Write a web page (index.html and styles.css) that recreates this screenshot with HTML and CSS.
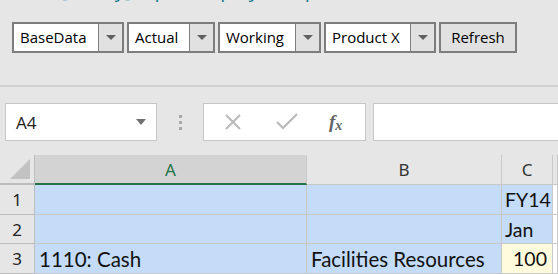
FILE: index.html
```html
<!DOCTYPE html>
<html>
<head>
<meta charset="utf-8">
<link rel="stylesheet" href="styles.css">
</head>
<body>
<div class="ribbon">
  <div class="title">Load [Query] Input Display Template</div>
  <div class="toolbar">
    <div class="combo"><span class="combo-text w84">BaseData</span><span class="combo-btn"><span class="tri"></span></span></div>
    <div class="combo"><span class="combo-text w60">Actual</span><span class="combo-btn"><span class="tri"></span></span></div>
    <div class="combo"><span class="combo-text w75">Working</span><span class="combo-btn"><span class="tri"></span></span></div>
    <div class="combo"><span class="combo-text w84">Product X</span><span class="combo-btn"><span class="tri"></span></span></div>
    <div class="button">Refresh</div>
  </div>
</div>
<div class="divider"></div>
<div class="fbar">
  <div class="namebox"><span>A4</span><span class="tri small"></span></div>
  <div class="dots"><i></i><i></i><i></i></div>
  <div class="fbtns">
    <svg class="ic-x" width="18" height="18" viewBox="0 0 18 18"><path d="M2 2 L16 16 M16 2 L2 16" stroke="#b9b9b9" stroke-width="2" fill="none"/></svg>
    <svg class="ic-ok" width="22" height="18" viewBox="0 0 22 18"><path d="M1 9 L7 15 L21 1" stroke="#b9b9b9" stroke-width="2.2" fill="none"/></svg>
    <span class="fx">f<sub>x</sub></span>
  </div>
  <div class="finput"></div>
</div>
<div class="sheet">
  <div class="row hdr">
    <div class="rh corner"><span class="corner-tri"></span></div>
    <div class="c a ch sel">A</div>
    <div class="c b ch">B</div>
    <div class="c cc ch">C</div>
    <div class="c d ch"></div>
  </div>
  <div class="row">
    <div class="rh">1</div>
    <div class="c a blue"></div>
    <div class="c b blue"></div>
    <div class="c cc blue">FY14</div>
    <div class="c d"></div>
  </div>
  <div class="row r2">
    <div class="rh">2</div>
    <div class="c a blue"></div>
    <div class="c b blue"></div>
    <div class="c cc blue">Jan</div>
    <div class="c d"></div>
  </div>
  <div class="row">
    <div class="rh">3</div>
    <div class="c a blue">1110: Cash</div>
    <div class="c b blue">Facilities Resources</div>
    <div class="c cc yellow num">100</div>
    <div class="c d"></div>
  </div>
</div>
</body>
</html>
```
FILE: styles.css
```css
html, body {
  margin: 0;
  padding: 0;
}
body {
  width: 558px;
  height: 274px;
  overflow: hidden;
  background: #e6e6e6;
  font-family: "Open Sans", "Noto Sans", sans-serif;
}
.ribbon {
  height: 85px;
  background: #e6e6e6;
  overflow: hidden;
}
.title {
  margin-top: -21px;
  margin-left: 10px;
  height: 25px;
  font-size: 20px;
  line-height: 22px;
  color: #1b7a93;
  white-space: nowrap;
}
.toolbar {
  display: flex;
  gap: 3px;
  padding-left: 12px;
  margin-top: 18px;
}
.combo {
  display: flex;
  height: 27px;
  border: 2px solid #7d7d7d;
  background: #e1e1e1;
}
.combo-text {
  background: #fff;
  font-size: 15px;
  line-height: 27px;
  color: #000;
  padding-left: 6px;
  box-sizing: border-box;
  white-space: nowrap;
}
.w84 { width: 84px; }
.w60 { width: 60px; }
.w75 { width: 75px; }
.combo-btn {
  width: 24px;
  box-sizing: border-box;
  border-left: 1px solid #7d7d7d;
  display: flex;
  align-items: center;
  justify-content: center;
  background: #e1e1e1;
}
.tri {
  width: 0;
  height: 0;
  border-left: 5px solid transparent;
  border-right: 5px solid transparent;
  border-top: 5px solid #606060;
}
.button {
  height: 27px;
  width: 74px;
  border: 2px solid #7d7d7d;
  background: #e1e1e1;
  font-size: 15px;
  line-height: 27px;
  text-align: center;
  color: #000;
}
.divider {
  height: 2px;
  background: #d2d2d2;
}
.fbar {
  height: 68px;
  box-sizing: border-box;
  padding-top: 16px;
  display: flex;
  align-items: flex-start;
}
.namebox {
  margin-left: 5px;
  width: 152px;
  height: 38px;
  box-sizing: border-box;
  border: 1px solid #c6c6c6;
  background: #fff;
  display: flex;
  align-items: center;
  justify-content: space-between;
  padding: 0 10px 0 10px;
  font-size: 17px;
  color: #222;
}
.tri.small {
  border-left-width: 5px;
  border-right-width: 5px;
  border-top: 6px solid #707070;
}
.dots {
  width: 46px;
  height: 38px;
  display: flex;
  flex-direction: column;
  align-items: center;
  justify-content: center;
  gap: 3px;
}
.dots i {
  width: 3px;
  height: 3px;
  background: #a8a8a8;
  display: block;
}
.fbtns {
  width: 163px;
  height: 38px;
  box-sizing: border-box;
  border: 1px solid #c6c6c6;
  background: #fff;
  display: flex;
  align-items: center;
  padding-left: 20px;
}
.ic-x { margin-right: 34px; }
.ic-ok { margin-right: 31px; }
.fx {
  font-family: "Liberation Serif", serif;
  font-style: italic;
  font-weight: bold;
  font-size: 19px;
  color: #666;
}
.fx sub {
  font-size: 14px;
  vertical-align: -2px;
}
.finput {
  margin-left: 7px;
  flex: 1;
  height: 38px;
  box-sizing: border-box;
  border: 1px solid #c6c6c6;
  border-right: none;
  background: #fff;
}
.sheet {
  background: #fff;
}
.row {
  display: flex;
  height: 30px;
}
.row.r2 {
  height: 29px;
}
.rh {
  width: 35px;
  flex: none;
  box-sizing: border-box;
  background: #e6e6e6;
  border-right: 1px solid #bdbdbd;
  border-bottom: 1px solid #bdbdbd;
  font-family: "Noto Sans", sans-serif;
  font-size: 17px;
  line-height: 29px;
  text-align: center;
  color: #222;
}
.corner {
  position: relative;
  background: #e6e6e6;
}
.corner-tri {
  position: absolute;
  right: 4px;
  bottom: 4px;
  width: 0;
  height: 0;
  border-left: 20px solid transparent;
  border-bottom: 20px solid #c2c2c2;
}
.c {
  flex: none;
  box-sizing: border-box;
  border-right: 1px solid #c8c8c8;
  border-bottom: 1px solid #c8c8c8;
  font-family: "Lato", sans-serif;
  font-size: 20.5px;
  line-height: 30px;
  padding-left: 4px;
  white-space: nowrap;
  overflow: hidden;
  color: #111;
}
.a { width: 272px; }
.b { width: 195px; }
.cc { width: 51px; padding-left: 3px; font-size: 19.5px; }
.d { flex: 1; }
.ch {
  background: #e6e6e6;
  border-color: #c8c8c8;
  font-family: "Noto Sans", sans-serif;
  font-size: 17px;
  line-height: 29px;
  text-align: center;
  padding-left: 0;
  color: #333;
}
.ch.sel {
  background: #d3d3d3;
  color: #217346;
  border-bottom: 2px solid #217346;
}
.hdr .rh { border-bottom: 2px solid #bdbdbd; }
.blue { background: #c5dcf8; }
.yellow { background: #fffbdc; }
.num { text-align: right; padding-right: 5px; }
```
